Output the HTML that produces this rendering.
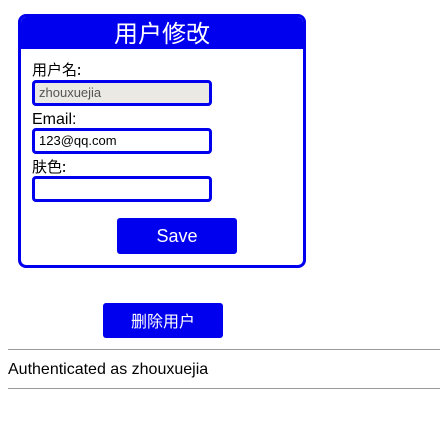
<!DOCTYPE html>
<html><head><meta charset="utf-8"><style>
body{margin:0;width:440px;height:423px;background:#fff;font-family:"Liberation Sans",sans-serif;color:#000;position:relative;overflow:hidden}
.cjk{font-family:"Noto Sans CJK JP","Noto Sans CJK SC","IPAGothic","NanumGothic",sans-serif}
.box{position:absolute;left:18px;top:14px;width:282px;height:248px;border:3px solid #0000ee;border-radius:8px;overflow:hidden}
.hd{position:absolute;left:0;top:0;width:100%;height:32px;background:#0000ee;color:#fff;font-size:24px;line-height:32px;text-align:center}
.lb{position:absolute;left:11px;font-size:15px;line-height:18px}
.in{position:absolute;left:11px;width:170px;height:20px;border:3px solid #0000ee;border-radius:4px;background:#fff;font-size:13px;line-height:20px;padding-left:4px;box-sizing:content-box}
.btn{position:absolute;background:#0000ee;color:#fff;font-size:18px;text-align:center;border-radius:3px}
.hr{position:absolute;left:8px;width:432px;height:1px;background:#999}
</style></head><body>
<div class="box">
<div class="hd cjk" style="line-height:30px">用户修改</div>
<div class="lb cjk" style="top:44px">用户名:</div>
<div class="in" style="top:63px;background:#ebe9e3;color:#555">zhouxuejia</div>
<div class="lb" style="top:94px;font-size:16px">Email:</div>
<div class="in" style="top:111px">123@qq.com</div>
<div class="lb cjk" style="top:141px">肤色:</div>
<div class="in" style="top:159px"></div>
<div class="btn" style="left:96px;top:201px;width:120px;height:36px;line-height:36px">Save</div>
</div>
<div class="btn cjk" style="left:103px;top:303px;width:120px;height:35px;line-height:35px;font-size:16px">删除用户</div>
<div class="hr" style="top:349px"></div>
<div style="position:absolute;left:8px;top:360px;font-size:16px;line-height:20px">Authenticated as zhouxuejia</div>
<div class="hr" style="top:388px"></div>
</body></html>
